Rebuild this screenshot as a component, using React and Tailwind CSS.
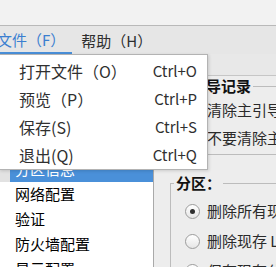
const menuItems = [
  { label: "打开文件（O）", shortcut: "Ctrl+O" },
  { label: "预览（P）", shortcut: "Ctrl+P" },
  { label: "保存(S)", shortcut: "Ctrl+S" },
  { label: "退出(Q)", shortcut: "Ctrl+Q" },
];

const sections = [
  "基本配置",
  "安装方法",
  "引导装载程序选项",
  "分区信息",
  "网络配置",
  "验证",
  "防火墙配置",
  "显示配置",
  "软件包选择",
];

function Radio({ checked, label }) {
  return (
    <label className="flex items-center gap-[7px] whitespace-nowrap text-[15px] text-[#2a2a2a]">
      <span className="flex h-[15px] w-[15px] shrink-0 items-center justify-center rounded-full border border-[#9c9c9c] bg-gradient-to-b from-white to-[#e6e6e6]">
        {checked && <span className="h-[5px] w-[5px] rounded-full bg-[#2e2e2e]" />}
      </span>
      {label}
    </label>
  );
}

function GroupBox({ title, options, rowClass, className }) {
  return (
    <fieldset className={`w-[300px] border border-[#bcbcbc] pb-[2px] ${className}`}>
      <legend className="ml-[3px] px-[2px] text-[15px] font-bold leading-[20px] text-[#111]">{title}</legend>
      <div className="pl-[14px]">
        {options.map((opt) => (
          <div className={`flex items-center ${rowClass}`} key={opt.label}>
            <Radio checked={opt.checked} label={opt.label} />
          </div>
        ))}
      </div>
    </fieldset>
  );
}

export default function App() {
  const selected = "分区信息";

  return (
    <div className="relative h-[267px] w-[276px] overflow-hidden bg-[#ededed] font-['Noto_Sans_CJK_SC','Noto_Sans',sans-serif]">
      <div className="h-[26px] border-b border-[#b9b9b9] bg-[#f2f2f2]" />

      <nav className="flex h-[28px] bg-[#e6e6e6] text-[15px]">
        <div className="-ml-[3px] flex items-center border-b-2 border-[#4a90d9] pr-[7px] pt-[2px] text-[#3b7fd0]">
          文件（F）
        </div>
        <div className="flex items-center pl-[9px] pt-[2px] text-[#2e2e2e]">帮助（H）</div>
      </nav>

      <div className="flex h-[213px]">
        <ul className="w-[154px] shrink-0 border-r border-[#a9a9a9] bg-white pt-[28px] text-[15px] text-black">
          {sections.map((name) =>
            name === selected ? (
              <li className="flex h-[25px]" key={name}>
                <span className="w-[10px] bg-[#e2e2e2]" />
                <span className="flex flex-1 items-center bg-[#4a90d9] pl-[5px] text-white">{name}</span>
              </li>
            ) : (
              <li className="flex h-[25px] items-center whitespace-nowrap pl-[15px]" key={name}>
                {name}
              </li>
            )
          )}
        </ul>

        <div className="min-w-0 flex-1 overflow-hidden">
          <div className="h-[22px] border-b border-[#c6c6c6] bg-[#e8e8e8]" />
          <div className="pl-[16px]">
            <GroupBox
              title="主引导记录"
              rowClass="h-[28px]"
              options={[
                { label: "清除主引导记录", checked: false },
                { label: "不要清除主引导记录", checked: true },
              ]}
            />
            <GroupBox
              className="mt-[18px] pt-[3px]"
              title="分区："
              rowClass="h-[30px]"
              options={[
                { label: "删除所有现存分区", checked: true },
                { label: "删除现存 Linux 分区", checked: false },
                { label: "保存现存分区", checked: false },
              ]}
            />
          </div>
        </div>
      </div>

      <div className="absolute left-[-1px] top-[54px] w-[209px] border border-[#b3b3b3] bg-white pt-[2px] text-[#303030] shadow-[1px_1px_3px_rgba(0,0,0,0.15)]">
        {menuItems.map((item) => (
          <div className="flex h-[28px] items-center justify-between pl-[19px] pr-[10px]" key={item.shortcut}>
            <span className="text-[16px]">{item.label}</span>
            <span className="text-[15px]">{item.shortcut}</span>
          </div>
        ))}
      </div>
    </div>
  );
}
